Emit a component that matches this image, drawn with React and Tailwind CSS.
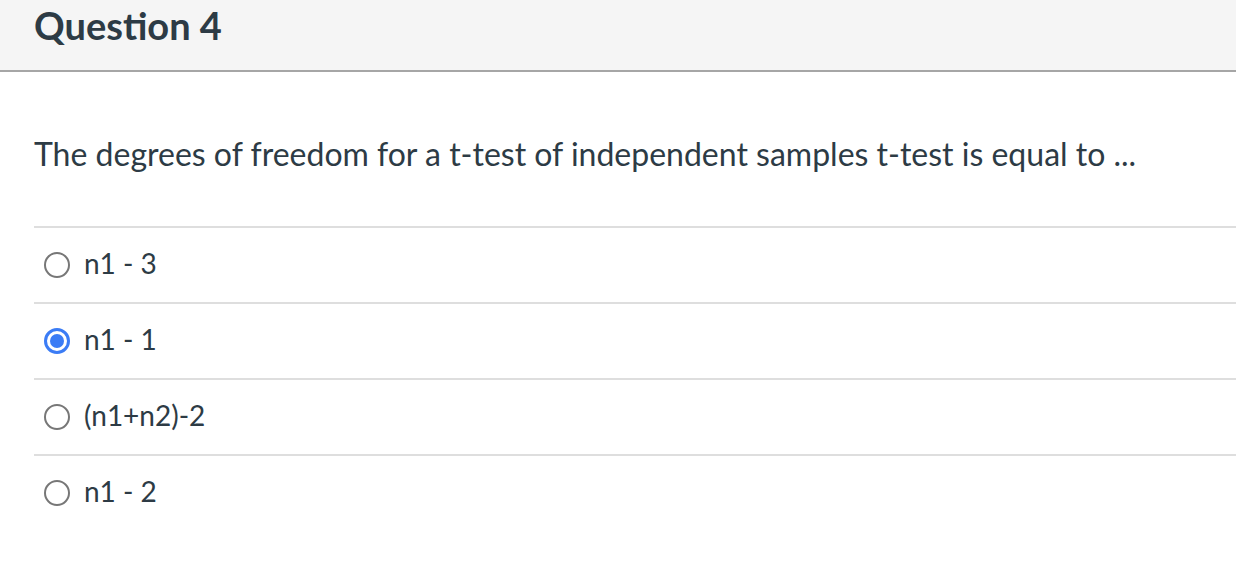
import React from 'react';

const answers = [
    { id: 'a1', label: 'n1 - 3', checked: false },
    { id: 'a2', label: 'n1 - 1', checked: true },
    { id: 'a3', label: '(n1+n2)-2', checked: false },
    { id: 'a4', label: 'n1 - 2', checked: false },
];

function Radio({ checked }) {
    if (checked) {
        return (
            <span className="flex h-[26px] w-[26px] items-center justify-center rounded-full border-[3px] border-[#3b7cf5] bg-white">
                <span className="h-[14px] w-[14px] rounded-full bg-[#3b7cf5]" />
            </span>
        );
    }
    return <span className="block h-[26px] w-[26px] rounded-full border-2 border-[#777777] bg-white" />;
}

export default function App() {
    return (
        <div className="min-h-screen bg-white text-[#2d3b45]" style={{ fontFamily: 'Lato, "Open Sans", sans-serif' }}>
            {/* header */}
            <div className="flex h-[72px] items-center border-b-2 border-[#a6a6a6] bg-[#f5f5f5] pl-[34px]">
                <h1 className="-mt-[20px] text-[38px] font-bold leading-none">Question 4</h1>
            </div>

            {/* question body */}
            <div className="pl-[34px]">
                <p className="pt-[62px] pb-[52px] text-[32px] leading-[40px]">
                    The degrees of freedom for a t-test of independent samples t-test is equal to ...
                </p>
                <div>
                    {answers.map((a) => (
                        <div key={a.id} className="flex h-[76px] items-center border-t-2 border-[#dedede] pl-[10px]">
                            <Radio checked={a.checked} />
                            <span className="mb-[4px] ml-[14px] text-[28px] leading-[40px]">{a.label}</span>
                        </div>
                    ))}
                </div>
            </div>
        </div>
    );
}
